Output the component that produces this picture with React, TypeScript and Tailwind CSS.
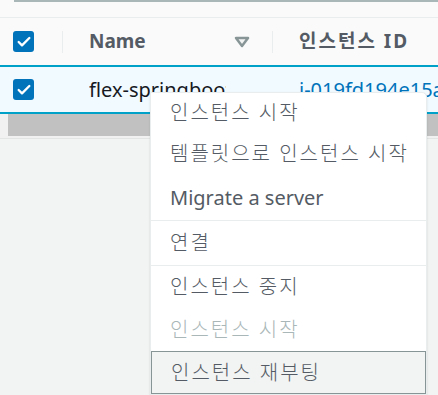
import { Check } from 'lucide-react'

const FONT = { fontFamily: '"Noto Sans", "Noto Sans CJK KR", sans-serif' }

function Box() {
  return (
    <span className="w-[21px] h-[21px] rounded-[3px] bg-[#0073bb] flex items-center justify-center">
      <Check size={16} strokeWidth={3.5} className="text-white" />
    </span>
  )
}

const ITEMS = [
  { label: '인스턴스 시작', h: 'h-[39px]', ko: true },
  { label: '템플릿으로 인스턴스 시작', h: 'h-[43px]', ko: true },
  { label: 'Migrate a server', h: 'h-[45px]', sep: true },
  { label: '연결', h: 'h-[44px]', sep: true, ko: true },
  { label: '인스턴스 중지', h: 'h-[42px]', ko: true },
  { label: '인스턴스 시작', h: 'h-[43px]', disabled: true, ko: true },
  { label: '인스턴스 재부팅', h: 'h-[43px]', active: true, ko: true },
]

export default function App() {
  return (
    <div className="relative w-[438px] h-[395px] overflow-hidden bg-[#f2f3f3]" style={FONT}>
      <div className="bg-[#fafafa]">
        <div className="h-[18px] border-b border-[#eaeded]">
          <div className="ml-[14px] h-[2px] bg-[#aab7b8]" />
        </div>
        <div className="h-[47px] flex items-center whitespace-nowrap">
          <div className="w-[63px] shrink-0 flex items-center pl-[13px] h-[22px] border-r border-[#eaeded]"><Box /></div>
          <div className="w-[210px] shrink-0 flex items-center justify-between pl-[26px] pr-[22px] h-[22px] border-r border-[#eaeded]">
            <span className="text-[19px] font-bold text-[#545b64]">Name</span>
            <svg width="16" height="12" viewBox="0 0 16 12">
              <path d="M2 2 H14 L8 10 Z" fill="#f2f3f3" stroke="#879596" strokeWidth="2.5" strokeLinejoin="round" />
            </svg>
          </div>
          <div className="pl-[26px] text-[19px] font-bold text-[#545b64] tracking-[2px]">인스턴스 ID</div>
        </div>
        <div className="h-[49px] flex items-center whitespace-nowrap bg-[#f1faff] border-y-2 border-[#00a1c9]">
          <div className="w-[63px] shrink-0 pl-[13px]"><Box /></div>
          <div className="w-[210px] shrink-0 pl-[26px]">
            <div className="w-[137px] overflow-hidden text-[20px] text-[#16191f]">flex-springboot</div>
          </div>
          <div className="pl-[26px] text-[20px] text-[#0073bb]">i-019fd194e15a</div>
        </div>
      </div>
      <div className="h-[25px] bg-[#f1f1f1] border-b border-[#e3e5e5] pl-[8px]">
        <div className="h-[22px] bg-[#c1c1c1]" />
      </div>

      <div className="absolute left-[150px] top-[92px] w-[277px] bg-white border border-[#eaeded] rounded-tr-[5px] shadow-[0_1px_2px_rgba(0,28,36,0.15)]">
        {ITEMS.map((it, i) => (
          <div key={i} className={it.sep ? 'border-b border-[#eaeded]' : ''}>
            <div
              className={`${it.h} flex items-center pl-[19px] text-[20px] whitespace-nowrap ${
                it.ko ? 'tracking-[2px] font-light' : ''
              } ${it.disabled ? 'text-[#aab7b8]' : 'text-[#545b64]'} ${
                it.active ? 'bg-[#f2f3f3] border border-[#879596] pl-[18px]' : ''
              }`}
            >
              {it.label}
            </div>
          </div>
        ))}
      </div>
    </div>
  )
}
